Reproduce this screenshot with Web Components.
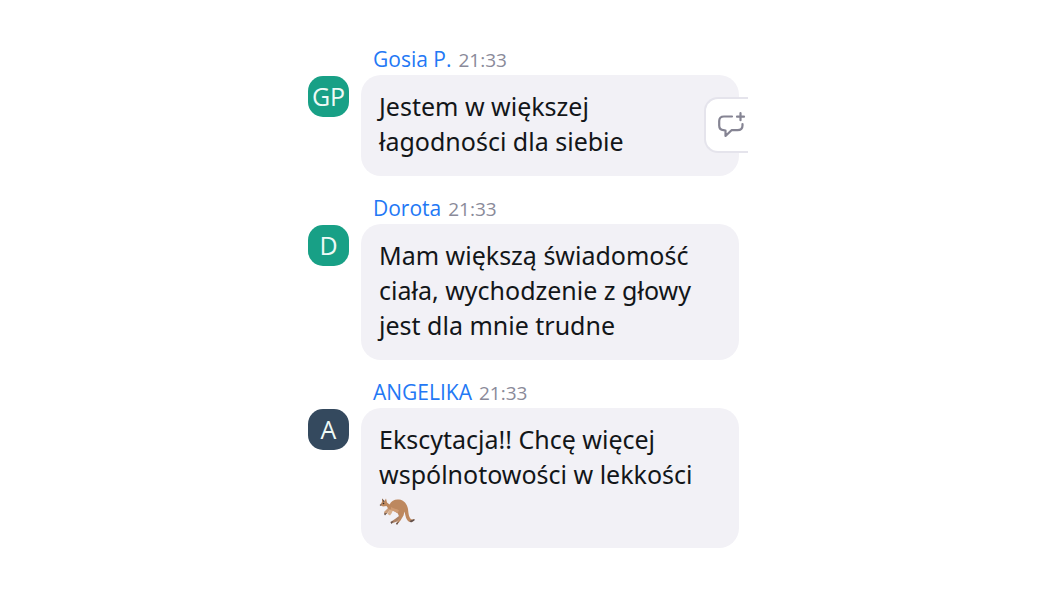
<!DOCTYPE html>
<html lang="pl">
<head>
<meta charset="utf-8">
<meta name="viewport" content="width=device-width, initial-scale=1">
<title>Czat</title>
<style>
  body { margin: 0; background: #fff; font-family: "Segoe UI", "Open Sans", "Noto Sans", sans-serif; }
</style>
</head>
<body>
<chat-thread>
  <chat-message name="Gosia P." time="21:33" initials="GP">Jestem w większej łagodności dla siebie<reaction-button slot="action"></reaction-button></chat-message>
  <chat-message name="Dorota" time="21:33" initials="D">Mam większą świadomość ciała, wychodzenie z głowy jest dla mnie trudne</chat-message>
  <chat-message name="ANGELIKA" time="21:33" initials="A" color="#34495e">Ekscytacja!! Chcę więcej wspólnotowości w lekkości <kangaroo-emoji></kangaroo-emoji></chat-message>
</chat-thread>

<template id="thread-template">
  <style>
    :host { display: block; box-sizing: border-box; padding: 45px 0; }
    main { display: flex; flex-direction: column; gap: 18px; box-sizing: border-box; width: 100%; max-width: 446px; margin: 0 auto; padding-left: 6px; }
  </style>
  <main><slot></slot></main>
</template>

<template id="message-template">
  <style>
    :host { display: block; }
    article { display: grid; grid-template-columns: auto minmax(0, 1fr); column-gap: 12px; padding-right: 9px; }
    header { grid-column: 2; display: flex; align-items: baseline; gap: 7px; padding: 0 12px 1px; line-height: 28px; }
    .name { color: #2378f5; font-size: 21px; }
    time { color: #8a8a99; font-size: 19px; }
    .bubble { position: relative; padding: 14px 32px 17px 18px; border-radius: 20px; background: #f2f1f6; color: #131619; font-family: "Segoe UI", "Noto Sans", sans-serif; font-size: 25px; line-height: 35px; }
    p { margin: 0; }
    chat-avatar { margin-top: 1px; }
    ::slotted([slot="action"]) { position: absolute; top: 22px; right: -9px; }
  </style>
  <article>
    <header><span class="name"></span><time></time></header>
    <chat-avatar></chat-avatar>
    <div class="bubble"><p><slot></slot></p><slot name="action"></slot></div>
  </article>
</template>

<template id="avatar-template">
  <style>
    :host { display: flex; align-items: center; justify-content: center; width: 41px; height: 41px; border-radius: 15px; background: var(--avatar-color, #18a086); color: #eefaf6; font-size: 25px; line-height: 41px; }
  </style>
  <slot></slot>
</template>

<template id="reaction-template">
  <style>
    :host { display: block; }
    button { display: flex; align-items: center; box-sizing: border-box; width: 44px; height: 56px; margin: 0; padding: 0 0 0 12px; border: 2px solid #e5e4ec; border-right: 0; border-radius: 14px 0 0 14px; background: #fff; cursor: pointer; }
    svg { display: block; flex: none; }
  </style>
  <button type="button" aria-label="Odpowiedz">
    <svg width="28" height="28" viewBox="0 0 28 28" fill="none" stroke="#858493" stroke-width="2.2" stroke-linecap="round" stroke-linejoin="round" aria-hidden="true">
      <path d="M14 5.500H6Q1.200 5.500 1.200 10V14.500Q1.200 19 5.500 19.200L7.500 19.500V25L13.500 19.200H19.500Q24.500 19.200 24.500 14.500V13"/>
      <path d="M22.500 2.200V9.200M19 5.700H26"/>
    </svg>
  </button>
</template>

<template id="kangaroo-template">
  <style>
    :host { display: inline-block; vertical-align: bottom; }
    svg { display: block; }
  </style>
  <svg width="36" height="39" viewBox="0 0 36 39" role="img" aria-label="Kangur">
    <path d="M9 16L5 20 5.500 23 8 21.500 12 17Z" fill="#c99d7b"/>
    <path d="M11 17L8.500 22 11 23.500 12.500 21.500 14.500 17Z" fill="#d7b08e"/>
    <path d="M18.500 20L20 24 16 27 11.500 30 12.500 31.500 18 29.500 23 24.500 23 19Z" fill="#ad8163"/>
    <path d="M1 13L3 10 3 6.500 5.500 9 7 6.500 8 10.500 10.500 12.500C12.500 8.500 16 7 20 7.500C25 8 28 12 29 17C29.500 22 30 26.500 33 27.500L35.500 27 34 29.500 31 30C27 29 26.500 23.500 25.500 19.500L24.500 23.500 21.500 28.500 18 32.500 17 31.500 20.500 26.500 19.500 22 14.500 18.500 9.500 17 7.500 14 4 14.500Z" fill="#bd885f"/>
    <path d="M12 15C15 17 18 16.500 20 18.500L18.500 21 12 18Z" fill="#cf9b73"/>
    <path d="M3 6.500L5.500 9 4.500 10.500ZM0.500 13L2.500 12 2 14Z" fill="#5b4d4b"/>
    <path d="M30.500 29L35.500 27 35.500 28.500 32 30.500ZM5 21.500L8 21 6 23.500ZM11.500 30L14.500 29 12.500 32ZM17 31.500L20 29.500 18 33Z" fill="#60504c"/>
    <circle cx="4.500" cy="11.500" r="0.800" fill="#332b2a"/>
  </svg>
</template>

<script>
  const stamp = (host, id) => {
    const root = host.attachShadow({ mode: "open" });
    root.append(document.getElementById(id).content.cloneNode(true));
    return root;
  };

  customElements.define("chat-thread", class extends HTMLElement {
    constructor() { super(); stamp(this, "thread-template"); }
  });
  customElements.define("chat-avatar", class extends HTMLElement {
    constructor() { super(); stamp(this, "avatar-template"); }
  });
  customElements.define("reaction-button", class extends HTMLElement {
    constructor() { super(); stamp(this, "reaction-template"); }
  });
  customElements.define("kangaroo-emoji", class extends HTMLElement {
    constructor() { super(); stamp(this, "kangaroo-template"); }
  });
  customElements.define("chat-message", class extends HTMLElement {
    constructor() { super(); stamp(this, "message-template"); }
    connectedCallback() {
      const root = this.shadowRoot;
      root.querySelector(".name").textContent = this.getAttribute("name");
      root.querySelector("time").textContent = this.getAttribute("time");
      const avatar = root.querySelector("chat-avatar");
      avatar.textContent = this.getAttribute("initials");
      if (this.hasAttribute("color")) avatar.style.setProperty("--avatar-color", this.getAttribute("color"));
    }
  });
</script>
</body>
</html>
